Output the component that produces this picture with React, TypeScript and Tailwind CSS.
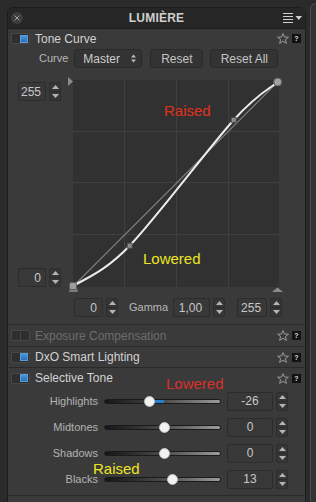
import React from "react";

const Up = () => (
  <svg width="7" height="4" viewBox="0 0 7 4">
    <path d="M0 4 L3.5 0 L7 4Z" fill="#b5b5b5" />
  </svg>
);
const Down = () => (
  <svg width="7" height="4" viewBox="0 0 7 4">
    <path d="M0 0 L3.5 4 L7 0Z" fill="#b5b5b5" />
  </svg>
);

const Spinner = () => (
  <div className="w-[12px] h-[19px] flex flex-col rounded-[2px] border border-[#2d2d2d] bg-[#363636]">
    <div className="flex-1 flex items-center justify-center border-b border-[#2a2a2a]">
      <Up />
    </div>
    <div className="flex-1 flex items-center justify-center">
      <Down />
    </div>
  </div>
);

const NumBox = ({ v, w, pr, center }: { v: string; w: string; pr?: string; center?: boolean }) => (
  <div
    className={`${w} h-[19px] rounded-[2px] border border-[#2c2c2c] bg-[#383838] flex items-center text-[12px] text-[#c8c8c8] ${
      center ? "justify-center" : "justify-end"
    } ${pr ?? ""}`}
  >
    {v}
  </div>
);

const Toggle = ({ on }: { on: boolean }) => (
  <div className="w-[19px] h-[11px] rounded-[1px] border border-[#474747] bg-[#2e2e2e] flex items-center justify-end pr-[1px]">
    {on ? (
      <div className="w-[8px] h-[8px] bg-gradient-to-b from-[#4a96de] to-[#2a6fb5] border border-[#5b9bd8]" />
    ) : (
      <div className="w-[8px] h-[8px] border-l border-[#474747]" />
    )}
  </div>
);

const Star = () => (
  <svg width="12" height="11" viewBox="0 0 12 11">
    <path
      d="M6 0.6 L7.5 4 L11.4 4.2 L8.4 6.6 L9.4 10.4 L6 8.3 L2.6 10.4 L3.6 6.6 L0.6 4.2 L4.5 4Z"
      fill="none"
      stroke="#9a9a9a"
      strokeWidth="1"
      strokeLinejoin="round"
    />
  </svg>
);

const Help = () => (
  <div className="w-[9px] h-[9px] bg-[#121212] flex items-center justify-center text-[7px] leading-none font-bold text-[#dcdcdc]">
    ?
  </div>
);

const SectionRow = ({
  title,
  on,
  dim,
  h,
  border = true,
}: {
  title: string;
  on: boolean;
  dim?: boolean;
  h: string;
  border?: boolean;
}) => (
  <div className={`${h} shrink-0 flex items-center pl-[3px] pr-[4px] ${border ? "border-b border-[#2a2a2a]" : ""}`}>
    <Toggle on={on} />
    <span className={`ml-[5px] text-[12px] ${dim ? "text-[#6c6c6c]" : "text-[#d2d2d2]"}`}>{title}</span>
    <div className="flex-1" />
    <Star />
    <div className="ml-[3px]">
      <Help />
    </div>
  </div>
);

const SliderRow = ({ label, pos, value, blue }: { label: string; pos: number; value: string; blue?: boolean }) => (
  <div className="h-[26px] flex items-center">
    <div className="w-[90px] text-right text-[11px] text-[#b4b4b4]">{label}</div>
    <div className="ml-[6px] w-[117px] h-[5px] relative rounded-full border border-[#1a1a1a] bg-gradient-to-r from-[#161616] via-[#4a4a4a] to-[#9c9c9c]">
      {blue && (
        <div className="absolute top-0 h-[3px] bg-[#2a7fcf]" style={{ left: pos + 3, width: 59 - pos - 3 }} />
      )}
      <div
        className="absolute top-1/2 w-[11px] h-[11px] -mt-[5.5px] rounded-full bg-[#f2f2f2] border border-[#bdbdbd]"
        style={{ left: pos - 5.5 }}
      />
    </div>
    <div className="ml-[6px]">
      <NumBox v={value} w="w-[46px]" center />
    </div>
    <div className="ml-[3px]">
      <Spinner />
    </div>
  </div>
);

const Graph = () => {
  const curve =
    "M0.5 206 C9.9 199.3 30 193.4 56.7 165.7 C83.4 138 136 67.3 160.7 40 C185.4 12.7 197.4 8.3 204.7 2";
  return (
    <div className="relative w-[206px] h-[207px] bg-[#313131]">
      <svg width="206" height="207" viewBox="0 0 206 207" overflow="visible" className="absolute left-0 top-0">
        {[51.5, 103.5, 155.5].map((x) => (
          <line key={"v" + x} x1={x} y1={0} x2={x} y2={207} stroke="#3f3f3f" strokeWidth="1" />
        ))}
        {[51.5, 102.5, 154.5].map((y) => (
          <line key={"h" + y} x1={0} y1={y} x2={206} y2={y} stroke="#3f3f3f" strokeWidth="1" />
        ))}
        <line x1="0.5" y1="206" x2="204.7" y2="2" stroke="#7a7a7a" strokeWidth="1.2" />
        <path d={curve} fill="none" stroke="#ececec" strokeWidth="2" />
        <rect x="54.2" y="163.2" width="5" height="5" fill="#8c8c8c" stroke="#444" strokeWidth="0.8" />
        <rect x="158.2" y="37.5" width="5" height="5" fill="#8c8c8c" stroke="#444" strokeWidth="0.8" />
        <circle cx="204.7" cy="2" r="4" fill="#a2a2a2" stroke="#5c5c5c" strokeWidth="1" />
        <path d="M-4 212 L-3 208 L4 208 L5 212Z" fill="#7c7c7c" />
        <rect x="-3.5" y="202.5" width="7" height="7" rx="1.5" fill="#9c9c9c" stroke="#555" strokeWidth="0.8" />
        <path d="M-5 -3 L0 1.5 L-5 6Z" fill="#8a8a8a" />
        <path d="M199 212 L204.5 207.5 L210 212Z" fill="#8a8a8a" />
      </svg>
      <div className="absolute left-[91px] top-[23px] text-[15px] leading-[15px] text-[#e2301f]">Raised</div>
      <div className="absolute left-[70px] top-[171px] text-[15px] leading-[15px] text-[#ebe624]">Lowered</div>
    </div>
  );
};

export default function App() {
  return (
    <div
      className="relative w-[316px] h-[502px] bg-[#2b2b2b] flex items-start overflow-hidden"
      style={{ fontFamily: '"Liberation Sans", Arial, sans-serif' }}
    >
      <div className="mt-[7px] ml-[7px] w-[299px] h-[510px] flex flex-col rounded-t-[6px] border border-[#1d1d1d] bg-[#3a3a3a] overflow-hidden">
        {/* header */}
        <div className="h-[21px] shrink-0 grid grid-cols-[1fr_auto_1fr] items-center bg-[#262626] border-b border-[#1e1e1e]">
          <div className="pl-[3px] flex items-center">
            <div className="w-[12px] h-[12px] rounded-full bg-[#3c3c3c] flex items-center justify-center">
              <svg width="6" height="6" viewBox="0 0 6 6">
                <path d="M0.5 0.5 L5.5 5.5 M5.5 0.5 L0.5 5.5" stroke="#a0a0a0" strokeWidth="1" />
              </svg>
            </div>
          </div>
          <div className="text-[12px] font-bold text-[#cfcfcf] tracking-[0.2px]">LUMIÈRE</div>
          <div className="flex items-center justify-end pr-[2px]">
            <svg width="20" height="11" viewBox="0 0 20 11">
              <path d="M0 0.5 H10 M0 3.5 H10 M0 6.5 H10 M0 9.5 H10" stroke="#d0d0d0" strokeWidth="1" />
              <path d="M12.5 3 L19 3 L15.75 7Z" fill="#d0d0d0" />
            </svg>
          </div>
        </div>

        {/* Tone Curve section */}
        <div className="shrink-0 flex flex-col border-b border-[#2a2a2a] pb-[7px]">
          <SectionRow title="Tone Curve" on h="h-[19px]" border={false} />
          <div className="h-[21px] flex items-center pl-[31px]">
            <span className="text-[11px] text-[#b8b8b8]">Curve</span>
            <div className="ml-[6px] w-[68px] h-[19px] rounded-[3px] border border-[#2a2a2a] bg-[#333333] flex items-center pl-[8px] pr-[5px]">
              <span className="text-[12px] text-[#cdcdcd]">Master</span>
              <div className="flex-1" />
              <svg width="5" height="9" viewBox="0 0 5 9">
                <path d="M0 3.5 L2.5 0.5 L5 3.5Z M0 5.5 L2.5 8.5 L5 5.5Z" fill="#bcbcbc" />
              </svg>
            </div>
            <div className="ml-[8px] w-[53px] h-[19px] rounded-[3px] border border-[#2a2a2a] bg-[#333333] flex items-center justify-center text-[12px] text-[#c4c4c4]">
              Reset
            </div>
            <div className="ml-[7px] w-[68px] h-[19px] rounded-[3px] border border-[#2a2a2a] bg-[#333333] flex items-center justify-center text-[12px] text-[#c4c4c4]">
              Reset All
            </div>
          </div>
          <div className="mt-[11px] flex items-start pl-[10px]">
            <div className="h-[207px] flex flex-col justify-between pt-[2px]">
              <div className="flex items-center">
                <NumBox v="255" w="w-[28px]" pr="pr-[4px]" />
                <div className="ml-[3px]">
                  <Spinner />
                </div>
              </div>
              <div className="flex items-center">
                <NumBox v="0" w="w-[28px]" pr="pr-[4px]" />
                <div className="ml-[3px]">
                  <Spinner />
                </div>
              </div>
            </div>
            <div className="ml-[12px]">
              <Graph />
            </div>
          </div>
          <div className="mt-[11px] flex items-center pl-[66px]">
            <NumBox v="0" w="w-[29px]" pr="pr-[5px]" />
            <div className="ml-[3px]">
              <Spinner />
            </div>
            <span className="ml-[11px] text-[11px] text-[#b8b8b8]">Gamma</span>
            <div className="ml-[5px]">
              <NumBox v="1,00" w="w-[37px]" pr="pr-[7px]" />
            </div>
            <div className="ml-[3px]">
              <Spinner />
            </div>
            <div className="ml-[12px]">
              <NumBox v="255" w="w-[30px]" pr="pr-[5px]" />
            </div>
            <div className="ml-[3px]">
              <Spinner />
            </div>
          </div>
        </div>

        <SectionRow title="Exposure Compensation" on={false} dim h="h-[22px]" />
        <SectionRow title="DxO Smart Lighting" on h="h-[21px]" />
        <SectionRow title="Selective Tone" on h="h-[20px]" border={false} />

        <div className="shrink-0 flex flex-col pb-[3px] border-b border-[#2a2a2a]">
          <SliderRow label="Highlights" pos={44} value="-26" blue />
          <SliderRow label="Midtones" pos={59} value="0" />
          <SliderRow label="Shadows" pos={59} value="0" />
          <SliderRow label="Blacks" pos={67} value="13" />
        </div>
      </div>

      <div className="mt-[3px] ml-[4px] flex-1 h-[510px] rounded-tl-[6px] border-l border-t border-[#4d4d4d] bg-[#333333]" />

      <div className="absolute left-[166px] top-[376px] text-[15px] leading-[15px] text-[#d9302a]">Lowered</div>
      <div className="absolute left-[93px] top-[461px] text-[15px] leading-[15px] text-[#ebe624]">Raised</div>
    </div>
  );
}
